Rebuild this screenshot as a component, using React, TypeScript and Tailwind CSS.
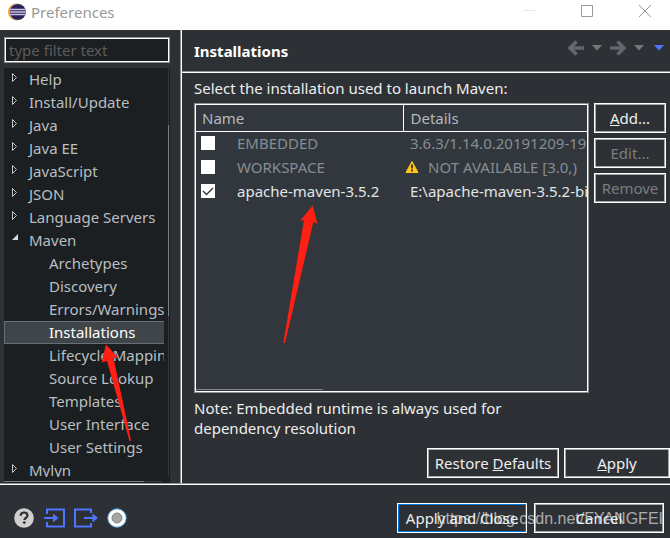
import React from "react";

type TreeEntry = { label: string; depth: 0 | 1; open?: boolean; selected?: boolean };

const TREE: TreeEntry[] = [
  { label: "Help", depth: 0 },
  { label: "Install/Update", depth: 0 },
  { label: "Java", depth: 0 },
  { label: "Java EE", depth: 0 },
  { label: "JavaScript", depth: 0 },
  { label: "JSON", depth: 0 },
  { label: "Language Servers", depth: 0 },
  { label: "Maven", depth: 0, open: true },
  { label: "Archetypes", depth: 1 },
  { label: "Discovery", depth: 1 },
  { label: "Errors/Warnings", depth: 1 },
  { label: "Installations", depth: 1, selected: true },
  { label: "Lifecycle Mappings", depth: 1 },
  { label: "Source Lookup", depth: 1 },
  { label: "Templates", depth: 1 },
  { label: "User Interface", depth: 1 },
  { label: "User Settings", depth: 1 },
  { label: "Mylyn", depth: 0 },
];

type Runtime = { name: string; details: string; checked: boolean; dim: boolean; warning?: boolean };

const RUNTIMES: Runtime[] = [
  { name: "EMBEDDED", details: "3.6.3/1.14.0.20191209-1925", checked: false, dim: true },
  { name: "WORKSPACE", details: "NOT AVAILABLE [3.0,)", checked: false, dim: true, warning: true },
  { name: "apache-maven-3.5.2", details: "E:\\apache-maven-3.5.2-bin", checked: true, dim: false },
];

function EclipseLogo() {
  return (
    <svg className="h-[18px] w-[18px] shrink-0" viewBox="0 0 18 18" aria-hidden="true">
      <circle cx="8.5" cy="9" r="8.5" fill="#f7941e" />
      <circle cx="9.6" cy="9" r="8.3" fill="#f4eefa" />
      <circle cx="9.8" cy="9" r="8.1" fill="#2c2255" />
      <path d="M2.2 6.500h15M1.8 9h16M2.2 11.500h15" stroke="#c9c4e2" strokeWidth="1.400" />
    </svg>
  );
}

function Expander({ open }: { open?: boolean }) {
  return (
    <svg className="h-3 w-2 shrink-0" viewBox="0 0 8 12" aria-hidden="true">
      {open ? (
        <path d="M6 1v6H0z" fill="#d5d9dc" />
      ) : (
        <path d="M.5 1.5v8l4-4z" fill="none" stroke="#c4c8ca" />
      )}
    </svg>
  );
}

function NavArrow({ flip }: { flip?: boolean }) {
  return (
    <svg className={flip ? "h-4 w-4 rotate-180" : "h-4 w-4"} viewBox="0 0 16 16" aria-hidden="true">
      <path d="M8.5 1.5L2 8l6.500 6.500M2 8h14" fill="none" stroke="#62666f" strokeWidth="3.600" />
    </svg>
  );
}

function Caret({ color }: { color: string }) {
  return (
    <svg className="h-[6px] w-[10px]" viewBox="0 0 10 6" aria-hidden="true">
      <path d="M0 0h10L5 5.500z" fill={color} />
    </svg>
  );
}

function BoxButton({
  children,
  className = "",
  disabled,
  primary,
}: {
  children: React.ReactNode;
  className?: string;
  disabled?: boolean;
  primary?: boolean;
}) {
  return (
    <button
      type="button"
      disabled={disabled}
      className={`flex h-[30px] items-center justify-center whitespace-nowrap border border-white bg-[#2d3135] ring-1 ring-inset ${
        primary ? "ring-[#0078d7]" : "ring-[#a7a7a7]"
      } ${disabled ? "text-[#7b7d80]" : "text-[#eeeeee]"} ${className}`}
    >
      <span>{children}</span>
    </button>
  );
}

function TitleBar() {
  return (
    <header className="flex h-[30px] shrink-0 items-start bg-white pl-2 text-[#999999]">
      <div className="flex h-[23px] flex-1 items-center gap-[5px]">
        <EclipseLogo />
        <span>Preferences</span>
      </div>
      <div className="flex h-[22px] items-center gap-[46px] pr-[19px]">
        <button type="button" aria-label="Minimize">
          <svg className="h-3 w-3" viewBox="0 0 12 12">
            <path d="M0 5.500h12" stroke="#e6e6e6" />
          </svg>
        </button>
        <button type="button" aria-label="Maximize">
          <svg className="h-3 w-3" viewBox="0 0 12 12">
            <path d="M.5.5h11v11H.5z" fill="none" stroke="#999999" />
          </svg>
        </button>
        <button type="button" aria-label="Close">
          <svg className="h-3 w-3" viewBox="0 0 12 12">
            <path d="M0 0l12 12M12 0L0 12" stroke="#999999" />
          </svg>
        </button>
      </div>
    </header>
  );
}

function Sidebar() {
  return (
    <nav className="flex w-[180px] shrink-0 flex-col gap-[5px] pl-1 pr-[10px] pt-[7px]">
      <input
        type="text"
        aria-label="Filter preferences"
        placeholder="type filter text"
        className="h-[26px] w-full shrink-0 border border-[#8f8f8f] bg-[#1b1f21] px-1 text-[#cccccc] outline-none ring-1 ring-inset ring-white placeholder:text-[#5c5c5c]"
      />
      <div className="flex min-h-0 flex-1 flex-col bg-[#1b1f21]">
        <div className="flex min-h-0 flex-1">
          <ul className="min-w-0 flex-1 overflow-hidden">
            {TREE.map((t) => (
              <li key={t.label}>
                <button
                  type="button"
                  className={`flex h-[23px] w-full items-center whitespace-nowrap border border-r-0 pb-[2px] text-left ${
                    t.selected ? "border-[#677079] bg-[#3f4549] text-white" : "border-transparent text-[#b9bec1]"
                  }`}
                >
                  {t.depth === 0 ? (
                    <span className="flex w-6 shrink-0 pb-[2px] pl-[7px]">
                      <Expander open={t.open} />
                    </span>
                  ) : (
                    <span className="w-11 shrink-0" />
                  )}
                  {t.label}
                </button>
              </li>
            ))}
          </ul>
          <div className="flex w-[6px] flex-col pl-1 pr-px">
            <div className="h-[57px] bg-[#30363a]" />
            <div className="h-[191px] bg-[#77828a]" />
            <div className="flex-1 bg-[#30363a]" />
          </div>
        </div>
        <div className="flex h-[6px] items-end pb-px pr-2">
          <div className="h-px flex-1 bg-[#77828a]" />
          <div className="h-px w-[18px] bg-[#3a4145]" />
        </div>
      </div>
    </nav>
  );
}

function RuntimeTable() {
  return (
    <div className="flex h-[290px] min-w-0 flex-1 flex-col overflow-hidden border border-[#8f8f8f] bg-[#31373d] ring-1 ring-inset ring-white">
      <div className="min-h-0 flex-1 overflow-hidden p-px">
        <table className="w-full table-fixed border-collapse whitespace-nowrap">
          <thead>
            <tr className="h-[26px] text-left text-[#b5babd]">
              <th className="w-[207px] border-b border-r border-white p-0 pl-[6px] font-normal">Name</th>
              <th className="border-b border-white p-0 pl-[7px] font-normal">Details</th>
            </tr>
          </thead>
          <tbody>
            {RUNTIMES.map((r) => (
              <tr key={r.name} className={r.dim ? "h-6 text-[#868d92]" : "h-6 text-[#e2e5e6]"}>
                <td className="p-0 pl-[5px]">
                  <label className="flex items-center gap-[22px]">
                    <span className="relative flex h-[14px] w-[14px]">
                      <input
                        type="checkbox"
                        defaultChecked={r.checked}
                        className="peer h-[14px] w-[14px] appearance-none bg-white"
                      />
                      <svg
                        className="pointer-events-none absolute inset-0 hidden h-[14px] w-[14px] peer-checked:block"
                        viewBox="0 0 14 14"
                      >
                        <path d="M2 7l3.500 3.500L12 4" fill="none" stroke="#333333" strokeWidth="1.300" />
                      </svg>
                    </span>
                    {r.name}
                  </label>
                </td>
                <td className={r.warning ? "overflow-hidden p-0 pl-[2px]" : "overflow-hidden p-0 pl-[7px]"}>
                  <span className="flex items-center gap-[9px]">
                    {r.warning && (
                      <svg className="h-[14px] w-[14px] shrink-0" viewBox="0 0 14 14" aria-label="Warning">
                        <path d="M7 1.500L13 12.500H1z" fill="#ffc61a" stroke="#ffc61a" strokeLinejoin="round" />
                        <path d="M7 4.500v4M7 9.500v2" stroke="#3a3000" strokeWidth="1.800" />
                      </svg>
                    )}
                    {r.details}
                  </span>
                </td>
              </tr>
            ))}
          </tbody>
        </table>
      </div>
      <div className="mx-px mb-[2px] h-px w-[127px] bg-[#80878c]" />
    </div>
  );
}

function Content() {
  return (
    <main className="flex min-w-0 flex-1 flex-col border-l border-[#8f8f8f]">
      <div className="flex min-h-0 flex-1 flex-col border-l border-white">
        <div className="shrink-0 border-b border-[#8f8f8f]">
          <div className="flex h-[41px] items-center justify-between pl-3 pr-[6px]">
            <h1 className="font-bold text-white">Installations</h1>
            <div className="flex items-center gap-2 pb-[5px]">
              <button type="button" aria-label="Back"><NavArrow /></button>
              <button type="button" aria-label="Back history"><Caret color="#74777a" /></button>
              <button type="button" aria-label="Forward"><NavArrow flip /></button>
              <button type="button" aria-label="Forward history"><Caret color="#74777a" /></button>
              <button type="button" aria-label="View menu" className="pl-[2px]"><Caret color="#4f74ff" /></button>
            </div>
          </div>
        </div>
        <div className="h-px shrink-0 bg-white" />
        <div className="flex min-h-0 flex-1 flex-col pl-3">
          <p className="flex h-[30px] shrink-0 items-center text-[#eeeeee]">
            Select the installation used to launch Maven:
          </p>
          <div className="flex gap-[5px] pr-1">
            <RuntimeTable />
            <div className="flex w-[72px] shrink-0 flex-col gap-[5px]">
              <BoxButton><u>A</u>dd...</BoxButton>
              <BoxButton disabled>Edit...</BoxButton>
              <BoxButton disabled>Remove</BoxButton>
            </div>
          </div>
          <p className="max-w-[360px] pt-[5px] text-[#eeeeee]">
            Note: Embedded runtime is always used for dependency resolution
          </p>
          <div className="mt-auto flex justify-end gap-[5px] pb-[5px]">
            <BoxButton className="w-[132px]">Restore <u>D</u>efaults</BoxButton>
            <BoxButton className="w-[106px]"><u>A</u>pply</BoxButton>
          </div>
        </div>
      </div>
    </main>
  );
}

function Footer() {
  return (
    <footer className="relative flex h-[53px] shrink-0 items-start justify-between pl-[14px] pr-[6px] pt-[18px]">
      <div className="flex items-center gap-[9px] pt-[5px]">
        <button type="button" aria-label="Help">
          <svg className="h-5 w-5" viewBox="0 0 20 20">
            <circle cx="10" cy="10" r="9.800" fill="#cfcfcf" />
            <path
              d="M6.600 7.700C6.700 5.600 8.100 4.500 10 4.500c2 0 3.400 1.100 3.400 2.900 0 2.300-3 2.500-3 4.600"
              fill="none"
              stroke="#2d3135"
              strokeWidth="2.200"
            />
            <circle cx="10.300" cy="14.600" r="1.400" fill="#2d3135" />
          </svg>
        </button>
        <button type="button" aria-label="Import">
          <svg className="h-5 w-[22px]" viewBox="0 0 22 20" fill="none" stroke="#4f74ff" strokeWidth="2">
            <path d="M4 6V1.500h17v17H4V14M1 10h11" />
            <path d="M10 5.500L15.500 10l-5.500 4.500z" fill="#4f74ff" stroke="none" />
          </svg>
        </button>
        <button type="button" aria-label="Export">
          <svg className="h-5 w-6" viewBox="0 0 24 20" fill="none" stroke="#4f74ff" strokeWidth="2">
            <path d="M17 5V1.500H1v17h16V15M10 10h11" />
            <path d="M18.500 5.500L24 10l-5.500 4.500z" fill="#4f74ff" stroke="none" />
          </svg>
        </button>
        <button type="button" aria-label="Record">
          <svg className="h-5 w-5" viewBox="0 0 20 20">
            <circle cx="10" cy="10" r="9.300" fill="#ffffff" stroke="#3e8cc4" />
            <circle cx="10" cy="10" r="5" fill="#a4a4a4" stroke="#858585" />
          </svg>
        </button>
      </div>
      <div className="flex gap-[7px]">
        <BoxButton primary className="w-[130px]">Apply and Close</BoxButton>
        <BoxButton className="w-[130px]">Cancel</BoxButton>
      </div>
      <span className="pointer-events-none absolute right-[7px] top-[24px] whitespace-nowrap font-['Liberation_Sans',Arial,sans-serif] text-base leading-5 text-white/60">
        https://blog.csdn.net/FYANGFEI
      </span>
    </footer>
  );
}

export default function App() {
  return (
    <div className="relative flex h-screen flex-col overflow-hidden bg-[#2d3135] font-['Noto_Sans','Open_Sans',sans-serif] text-[15px] leading-5">
      <TitleBar />
      <div className="flex min-h-0 flex-1">
        <Sidebar />
        <Content />
      </div>
      <div className="h-[2px] shrink-0 border-b border-white bg-[#8f8f8f]" />
      <Footer />
      <svg className="pointer-events-none absolute left-[283px] top-[205px] h-[139px] w-[36px]" viewBox="0 0 36 139">
        <path d="M29.700 .5L34.500 19L30.500 16.500L2 138H.3L21 15L17 16z" fill="#ff2013" />
      </svg>
      <svg className="pointer-events-none absolute left-[100px] top-[344px] h-[98px] w-[34px]" viewBox="0 0 34 98">
        <path d="M6 .5L18 13.500L13.500 14L31 96.500L29.500 97L7 17L1.500 18.500z" fill="#ff2013" />
      </svg>
    </div>
  );
}
